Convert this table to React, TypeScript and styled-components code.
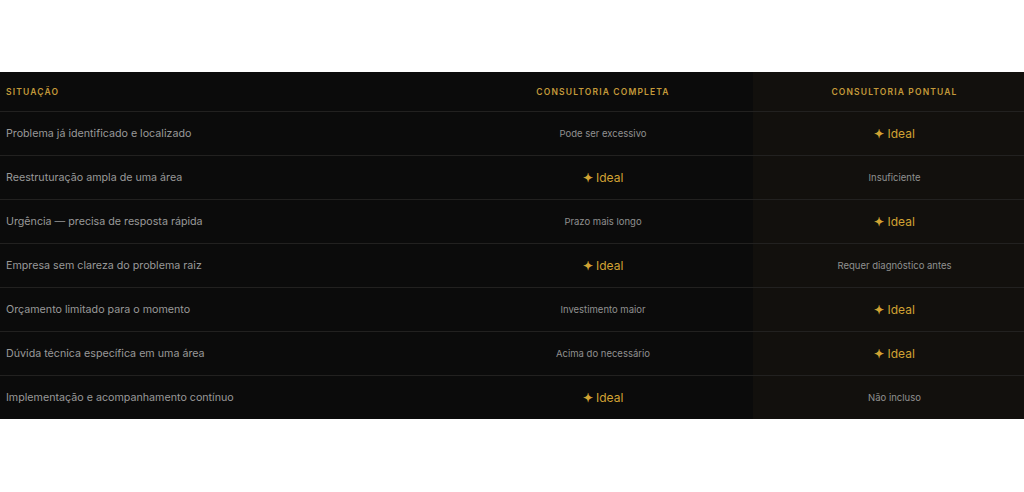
import React from 'react'
import { styled, createGlobalStyle } from 'styled-components'

type Verdict = { text: string; ideal?: boolean }

interface RowData {
  situation: string
  full: Verdict
  spot: Verdict
}

const rows: RowData[] = [
  { situation: 'Problema já identificado e localizado', full: { text: 'Pode ser excessivo' }, spot: { text: 'Ideal', ideal: true } },
  { situation: 'Reestruturação ampla de uma área', full: { text: 'Ideal', ideal: true }, spot: { text: 'Insuficiente' } },
  { situation: 'Urgência — precisa de resposta rápida', full: { text: 'Prazo mais longo' }, spot: { text: 'Ideal', ideal: true } },
  { situation: 'Empresa sem clareza do problema raiz', full: { text: 'Ideal', ideal: true }, spot: { text: 'Requer diagnóstico antes' } },
  { situation: 'Orçamento limitado para o momento', full: { text: 'Investimento maior' }, spot: { text: 'Ideal', ideal: true } },
  { situation: 'Dúvida técnica específica em uma área', full: { text: 'Acima do necessário' }, spot: { text: 'Ideal', ideal: true } },
  { situation: 'Implementação e acompanhamento contínuo', full: { text: 'Ideal', ideal: true }, spot: { text: 'Não incluso' } },
]

function Cell({ verdict, highlight }: { verdict: Verdict; highlight?: boolean }) {
  return (
    <Td $center $highlight={highlight}>
      {verdict.ideal ? (
        <Ideal>
          <Star>✦</Star> Ideal
        </Ideal>
      ) : (
        <Note>{verdict.text}</Note>
      )}
    </Td>
  )
}

export default function App() {
  return (
    <>
      <GlobalStyle />
      <Page>
        <Table>
          <colgroup>
            <col style={{ width: 453 }} />
            <col style={{ width: 300 }} />
            <col />
          </colgroup>
          <thead>
            <tr>
              <Th>Situação</Th>
              <Th $center>Consultoria Completa</Th>
              <Th $center $highlight>
                Consultoria Pontual
              </Th>
            </tr>
          </thead>
          <tbody>
            {rows.map((row) => (
              <tr key={row.situation}>
                <Td>{row.situation}</Td>
                <Cell verdict={row.full} />
                <Cell verdict={row.spot} highlight />
              </tr>
            ))}
          </tbody>
        </Table>
      </Page>
    </>
  )
}

const GlobalStyle = createGlobalStyle`
  body {
    margin: 0;
    background: #ffffff;
    font-family: Inter, 'Noto Sans', sans-serif;
  }
`

const Page = styled.div`
  padding: 72px 0 0;
`

const Table = styled.table`
  width: 100%;
  border-collapse: collapse;
  table-layout: fixed;
  background: #0b0b0b;
`

const Th = styled.th<{ $center?: boolean; $highlight?: boolean }>`
  height: 39px;
  padding: 0 6px;
  padding-left: ${(p) => (p.$highlight ? '18px' : '6px')};
  text-align: ${(p) => (p.$center ? 'center' : 'left')};
  font-size: 8.5px;
  font-weight: 600;
  letter-spacing: 1.15px;
  text-transform: uppercase;
  color: #c49a3a;
  background: ${(p) => (p.$highlight ? '#12100d' : 'transparent')};
  border-bottom: 1px solid #222120;
`

const Td = styled.td<{ $center?: boolean; $highlight?: boolean }>`
  height: 43px;
  padding: 0 6px;
  padding-left: ${(p) => (p.$highlight ? '18px' : '6px')};
  text-align: ${(p) => (p.$center ? 'center' : 'left')};
  font-size: 10.7px;
  color: #999999;
  background: ${(p) => (p.$highlight ? '#12100d' : 'transparent')};
  border-bottom: 1px solid #222120;

  tr:last-child & {
    border-bottom: none;
  }
`

const Note = styled.span`
  font-size: 9.5px;
  color: #909090;
`

const Ideal = styled.span`
  font-size: 12px;
  color: #d1a233;
`

const Star = styled.span`
  font-size: 12px;
  font-weight: 700;
`
